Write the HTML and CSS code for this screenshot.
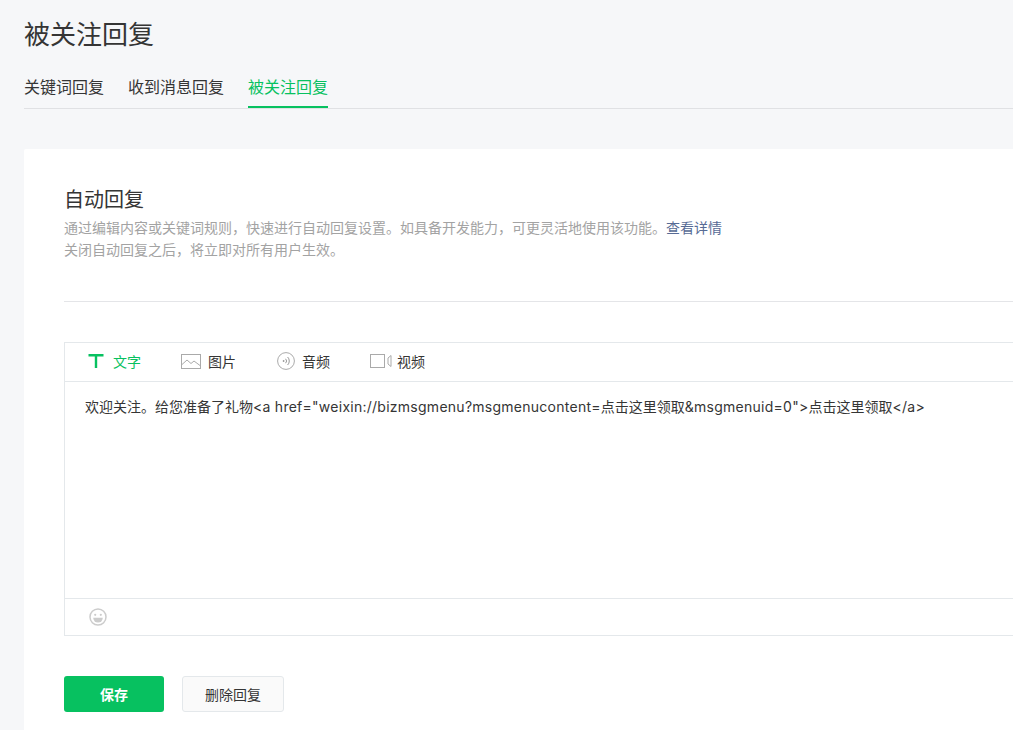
FILE: index.html
```html
<!DOCTYPE html>
<html lang="zh-CN">
<head>
    <meta charset="UTF-8">
    <title>被关注回复</title>
    <link rel="stylesheet" href="styles.css">
</head>
<body>
    <div class="main">
        <h2 class="page-title">被关注回复</h2>
        <ul class="tabs">
            <li class="tab">关键词回复</li>
            <li class="tab">收到消息回复</li>
            <li class="tab tab-active">被关注回复</li>
        </ul>
        <div class="card">
            <h3 class="card-title">自动回复</h3>
            <p class="desc">通过编辑内容或关键词规则，快速进行自动回复设置。如具备开发能力，可更灵活地使用该功能。<a class="desc-link" href="#">查看详情</a></p>
            <p class="desc">关闭自动回复之后，将立即对所有用户生效。</p>
            <div class="divider"></div>
            <div class="editor">
                <ul class="media-bar">
                    <li class="media media-text media-active">
                        <svg class="icon" width="16" height="14" viewBox="0 0 16 14"><path d="M0.5 1.2h15M8 1.2v12.8" fill="none" stroke="#07c160" stroke-width="2.4"/></svg>
                        文字
                    </li>
                    <li class="media media-image">
                        <svg class="icon" width="20" height="15" viewBox="0 0 20 15"><rect x="0.5" y="0.5" width="19" height="14" fill="none" stroke="#aaa"/><path d="M1 10.5l5-4.5 4 3.5 3-2.5 6 4.5" fill="none" stroke="#aaa"/></svg>
                        图片
                    </li>
                    <li class="media media-audio">
                        <svg class="icon" width="18" height="18" viewBox="0 0 18 18"><circle cx="9" cy="9" r="8.4" fill="none" stroke="#aaa"/><circle cx="6.6" cy="9" r="0.9" fill="#999"/><path d="M8.6 6.8a3.2 3.2 0 0 1 0 4.4M10.6 5a5.6 5.6 0 0 1 0 8" fill="none" stroke="#999"/></svg>
                        音频
                    </li>
                    <li class="media media-video">
                        <svg class="icon" width="22" height="14" viewBox="0 0 22 14"><rect x="0.5" y="0.5" width="14" height="13" fill="none" stroke="#aaa"/><path d="M21 1.5v11l-3-2.5v-6z" fill="none" stroke="#aaa"/></svg>
                        视频
                    </li>
                </ul>
                <div class="editor-body">欢迎关注。给您准备了礼物<span class="latin">&lt;a href="weixin://bizmsgmenu?msgmenucontent=</span>点击这里领取<span class="latin">&amp;msgmenuid=0"&gt;</span>点击这里领取<span class="latin">&lt;/a&gt;</span></div>
                <div class="editor-foot">
                    <svg width="18" height="18" viewBox="0 0 18 18"><circle cx="9" cy="9" r="8" fill="none" stroke="#ccc" stroke-width="1.5"/><circle cx="6.2" cy="6.8" r="1.1" fill="#ccc"/><circle cx="11.8" cy="6.8" r="1.1" fill="#ccc"/><path d="M4.2 9.8h9.6a4.8 4.8 0 0 1-9.6 0z" fill="#ccc"/></svg>
                </div>
            </div>
            <div class="actions">
                <button class="btn btn-primary">保存</button>
                <button class="btn btn-default">删除回复</button>
            </div>
        </div>
    </div>
</body>
</html>
```

FILE: styles.css
```css
html, body {
    height: 100%;
}
body {
    margin: 0;
    overflow: hidden;
    background-color: #f6f7f9;
    color: #353535;
    font-family: "Inter", "Noto Sans CJK SC", sans-serif;
}
ul {
    list-style: none;
    margin: 0;
    padding: 0;
}
.main {
    width: 1100px;
    padding: 18px 0 0 24px;
}
.page-title {
    margin: 0;
    font-size: 26px;
    line-height: 34px;
    font-weight: 400;
}
.tabs {
    display: flex;
    gap: 24px;
    margin-top: 15px;
    height: 41px;
    border-bottom: 1px solid #e0e1e4;
}
.tab {
    font-size: 16px;
    line-height: 40px;
    height: 41px;
    box-sizing: border-box;
}
.tab-active {
    color: #07c160;
    border-bottom: 2px solid #07c160;
}
.card {
    margin-top: 40px;
    padding: 37px 40px 0;
    height: 600px;
    background: #fff;
    border-radius: 2px;
}
.card-title {
    margin: 0 0 3px;
    font-size: 20px;
    line-height: 28px;
    font-weight: 400;
}
.desc {
    margin: 0;
    font-size: 14px;
    line-height: 22px;
    color: #a3a3a3;
}
.desc-link {
    color: #576b95;
    text-decoration: none;
}
.divider {
    margin-top: 40px;
    border-top: 1px solid #e4e5e8;
}
.editor {
    margin-top: 40px;
    border: 1px solid #e4e8eb;
}
.media-bar {
    display: flex;
    align-items: center;
    height: 36px;
    padding-bottom: 2px;
    border-bottom: 1px solid #e4e8eb;
    font-size: 14px;
}
.media {
    display: flex;
    align-items: center;
}
.icon {
    flex: none;
}
.media-active {
    color: #07c160;
}
.media-text {
    width: 116px;
    padding-left: 23px;
    gap: 9px;
    box-sizing: border-box;
}
.media-image {
    width: 96px;
    gap: 7px;
}
.media-audio {
    width: 93px;
    gap: 7px;
}
.media-video {
    gap: 5px;
}
.editor-body {
    height: 216px;
    box-sizing: border-box;
    padding: 15px 20px;
    font-size: 14px;
    line-height: 20px;
}
.latin {
    letter-spacing: 0.26px;
}
.editor-foot {
    display: flex;
    align-items: center;
    height: 36px;
    padding-left: 24px;
    border-top: 1px solid #e4e8eb;
}
.actions {
    display: flex;
    gap: 18px;
    margin-top: 40px;
}
.btn {
    height: 36px;
    font-family: inherit;
    font-size: 14px;
    border-radius: 3px;
    padding: 0;
}
.btn-primary {
    width: 100px;
    border: 0;
    background-color: #07c160;
    color: #fff;
    font-weight: 700;
}
.btn-default {
    width: 102px;
    border: 1px solid #e4e8eb;
    background-color: #fafafa;
    color: #353535;
}
```
